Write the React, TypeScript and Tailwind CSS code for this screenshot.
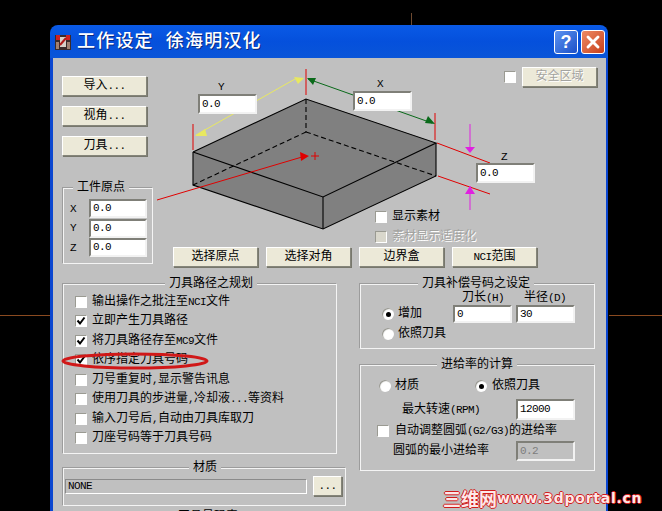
import React from "react";
import { X } from "lucide-react";

const L = ({ children }: { children: React.ReactNode }) => (
  <span className="text-[11px] tracking-[-0.6px]">{children}</span>
);

const Btn = ({ children, width = "w-[85px]", disabled = false }: { children: React.ReactNode; width?: string; disabled?: boolean }) => (
  <div
    className={`h-5 flex items-center justify-center bg-[#ece9d8] border border-t-white border-l-white border-r-[#85857a] border-b-[#85857a] shadow-[1px_1px_0_#77776c] ${
      disabled ? "text-[#a3a3a0] [text-shadow:1px_1px_0_#fff]" : ""
    } ${width}`}
  >
    {children}
  </div>
);

const Field = ({ value, className = "", disabled = false }: { value: string; className?: string; disabled?: boolean }) => (
  <div
    className={`flex items-center pl-[2px] border-2 border-t-[#7f7f78] border-l-[#7f7f78] border-r-[#f2f2f2] border-b-[#f2f2f2] ${
      disabled ? "bg-[#c0c0c0] text-[#7d7d7d]" : "bg-white text-black"
    } ${className}`}
  >
    <L>{value}</L>
  </div>
);

const Check = ({ checked = false, disabled = false }: { checked?: boolean; disabled?: boolean }) => (
  <div
    className={`w-3 h-3 shrink-0 flex items-center justify-center border border-t-[#9a9a92] border-l-[#9a9a92] border-r-white border-b-white ${
      disabled ? "bg-[#d9d7cc]" : "bg-white"
    }`}
  >
    {checked && (
      <svg width="10" height="10" viewBox="0 0 10 10">
        <path d="M1.5 4.5 L4 7.5 L8.5 1.5" fill="none" stroke="#000" strokeWidth="2" />
      </svg>
    )}
  </div>
);

const Radio = ({ on = false }: { on?: boolean }) => (
  <div className="w-3 h-3 shrink-0 rounded-full bg-white flex items-center justify-center shadow-[inset_1px_1px_1px_#8f8f88]">
    {on && <div className="w-[5px] h-[5px] rounded-full bg-black" />}
  </div>
);

const Group = ({ title, titleLeft, className = "", children }: { title: string; titleLeft: string; className?: string; children?: React.ReactNode }) => (
  <fieldset className={`border border-[#f4f4f4] shadow-[-1px_-1px_0_#9c9c9c] ${className}`}>
    <legend className={`px-1 h-4 leading-4 bg-[#c0c0c0] ${titleLeft}`}>{title}</legend>
    {children}
  </fieldset>
);

const toolRows: { label: React.ReactNode; checked?: boolean; circled?: boolean }[] = [
  { label: <>输出操作之批注至<L>NCI</L>文件</> },
  { label: "立即产生刀具路径", checked: true },
  { label: <>将刀具路径存至<L>MC9</L>文件</>, checked: true },
  { label: "依序指定刀具号码", checked: true, circled: true },
  { label: <>刀号重复时<L>,</L>显示警告讯息</> },
  { label: <>使用刀具的步进量<L>,</L>冷却液<L>...</L>等资料</> },
  { label: <>输入刀号后<L>,</L>自动由刀具库取刀</> },
  { label: "刀座号码等于刀具号码" },
];

function StockDrawing() {
  return (
    <svg className="w-[451px] h-[185px] block" viewBox="155 58 451 185">
      <polygon points="306,99 436,143 436,176 323,229 193,185 193,152" fill="#808080" />
      <g stroke="#000" fill="none" strokeWidth="1.1">
        <polyline points="193,152 306,99 436,143 323,197 193,152" />
        <polyline points="193,152 193,185 323,229 436,176 436,143" />
        <line x1="323" y1="197" x2="323" y2="229" />
        <g strokeDasharray="5 3">
          <line x1="306" y1="99" x2="306" y2="132" />
          <line x1="306" y1="132" x2="193" y2="185" />
          <line x1="306" y1="132" x2="436" y2="176" />
        </g>
      </g>
      <g stroke="#e00000" strokeWidth="1" fill="none">
        <line x1="306" y1="69" x2="306" y2="95" />
        <line x1="193" y1="124" x2="193" y2="150" />
        <line x1="435" y1="113" x2="435" y2="140" />
        <line x1="157" y1="200" x2="302" y2="157" />
        <line x1="437" y1="143" x2="490" y2="163" />
        <line x1="438" y1="176" x2="490" y2="194" />
        <line x1="311" y1="156" x2="319" y2="156" />
        <line x1="315" y1="152" x2="315" y2="160" />
      </g>
      <polygon points="300,152 309,156 301,161" fill="#e00000" />
      <line x1="295" y1="79" x2="196" y2="135" stroke="#e8e860" />
      <polygon points="304,78 294,77 298,84" fill="#e8e860" />
      <polygon points="195,136 205,129 207,136" fill="#e8e860" />
      <line x1="308" y1="79" x2="432" y2="123" stroke="#0a6a1a" />
      <polygon points="307,78 316,78 313,85" fill="#0a6a1a" />
      <polygon points="435,124 425,123 428,116" fill="#0a6a1a" />
      <line x1="470" y1="124" x2="470" y2="152" stroke="#e020e0" />
      <polygon points="470,153 465,147 475,147" fill="#e020e0" />
      <line x1="470" y1="186" x2="470" y2="210" stroke="#e020e0" />
      <polygon points="470,186 465,194 475,194" fill="#e020e0" />
    </svg>
  );
}

export default function App() {
  return (
    <div
      className="relative w-[662px] h-[511px] overflow-hidden bg-black pl-[50px] pt-[25px] text-[12px] leading-none text-black"
      style={{ fontFamily: '"Liberation Mono", "Noto Sans CJK SC", monospace' }}
    >
      {/* lines of the CAD view behind the dialog */}
      <div className="absolute left-0 top-[315px] w-[50px] h-px bg-[#8a4a20]" />
      <div className="absolute left-[609px] top-[315px] w-[53px] h-px bg-[#8a4a20]" />
      <div className="absolute left-[411px] top-[13px] w-px h-3 bg-[#6e4a30]" />

      <div className="w-[558px]">
        {/* Title bar */}
        <div className="h-[33px] rounded-t-lg bg-gradient-to-b from-[#0a5ae6] via-[#0550dc] to-[#0a55d8] flex items-center pl-[5px] pr-[3px]">
          <svg width="16" height="16" viewBox="0 0 16 16" className="shrink-0">
            <rect x="0" y="1" width="16" height="15" fill="#3a2a2a" />
            <rect x="1" y="1" width="4" height="5" fill="#d02020" />
            <rect x="11" y="1" width="4" height="5" fill="#d02020" />
            <path d="M5 3 H11 V13 H5 Z" fill="#d8d0c8" />
            <path d="M5 11 L11 4" stroke="#b01818" strokeWidth="2" />
            <rect x="1" y="8" width="3" height="7" fill="#a08070" />
            <rect x="12" y="8" width="3" height="7" fill="#a08070" />
          </svg>
          <span className="ml-[6px] text-white text-[18px] tracking-[1.2px] font-medium whitespace-pre [text-shadow:1px_1px_0_#0a2a80]">
            工作设定 徐海明汉化
          </span>
          <div className="ml-auto flex gap-[3px]">
            <div className="w-6 h-6 rounded-[3px] border border-white bg-gradient-to-br from-[#5c93f0] to-[#1c4fc8] flex items-center justify-center text-white text-[18px] font-bold" style={{ fontFamily: '"Liberation Sans", sans-serif' }}>
              ?
            </div>
            <div className="w-6 h-6 rounded-[3px] border border-white bg-gradient-to-br from-[#ee8a64] to-[#c63d16] flex items-center justify-center text-white">
              <X size={20} strokeWidth={3.5} />
            </div>
          </div>
        </div>

        {/* Dialog body */}
        <div className="bg-[#c0c0c0] border-l-[3px] border-r-2 border-[#0b46d0] h-[460px]">
          <div className="flex">
            <div className="w-[102px] shrink-0 pl-[9px] pt-[18px]">
              <div className="flex flex-col gap-[10px]">
                <Btn>导入<L>...</L></Btn>
                <Btn>视角<L>...</L></Btn>
                <Btn>刀具<L>...</L></Btn>
              </div>
              <Group title="工件原点" titleLeft="ml-[3px]" className="mt-[24px] ml-px w-[90px] h-[84px] pl-[6px]">
                <div className="pt-[3px] flex flex-col gap-[0.5px]">
                  {["X", "Y", "Z"].map((axis) => (
                    <div key={axis} className="flex items-center">
                      <span className="w-[19px]"><L>{axis}</L></span>
                      <Field value="0.0" className="w-[58px] h-[19px]" />
                    </div>
                  ))}
                </div>
              </Group>
            </div>

            <div className="w-[451px]">
              <div className="relative h-[185px]">
                <StockDrawing />
                <span className="absolute left-[63px] top-[23px]"><L>Y</L></span>
                <Field value="0.0" className="absolute left-[43px] top-[36px] w-[59px] h-5" />
                <span className="absolute left-[222px] top-[20px]"><L>X</L></span>
                <Field value="0.0" className="absolute left-[198px] top-[33px] w-[59px] h-5" />
                <span className="absolute left-[346px] top-[93px]"><L>Z</L></span>
                <Field value="0.0" className="absolute left-[321px] top-[105px] w-[59px] h-5" />
                <div className="absolute left-[349px] top-[9px] flex items-center gap-[6px]">
                  <Check />
                  <Btn disabled width="w-[75px]">安全区域</Btn>
                </div>
                <div className="absolute left-[220px] top-[153px] flex flex-col gap-2">
                  <div className="flex items-center gap-[5px]"><Check />显示素材</div>
                  <div className="flex items-center gap-[5px] text-[#a3a3a0] [text-shadow:1px_1px_0_#fff]"><Check disabled />素材显示适度化</div>
                </div>
              </div>
              <div className="flex gap-2 mt-1 pl-[18px]">
                <Btn>选择原点</Btn>
                <Btn>选择对角</Btn>
                <Btn>边界盒</Btn>
                <Btn><L>NCI</L>范围</Btn>
              </div>
            </div>
          </div>

          <div className="flex pl-[10px] mt-[9px]">
            <div className="w-[283px] shrink-0">
              <Group title="刀具路径之规划" titleLeft="ml-[90px]" className="w-[274px] h-[178px] pl-[11px]">
                <div className="flex flex-col">
                  {toolRows.map((row, i) => (
                    <div key={i} className="relative flex items-center gap-[5px] h-[19.5px]">
                      <Check checked={row.checked} />
                      <span className="whitespace-nowrap">{row.label}</span>
                      {row.circled && (
                        <svg className="absolute left-[-14px] top-[-1px]" width="148" height="22" viewBox="0 0 148 22">
                          <ellipse cx="74" cy="11" rx="72" ry="7" fill="none" stroke="#d01818" strokeWidth="3" />
                        </svg>
                      )}
                    </div>
                  ))}
                </div>
              </Group>
              <Group title="材质" titleLeft="ml-[124px]" className="mt-[6px] w-[283px] h-[46px] px-px">
                <div className="flex items-center gap-[6px]">
                  <div className="w-[242px] h-[15px] flex items-center pl-[2px] border border-t-[#8a8a8a] border-l-[#8a8a8a] border-r-white border-b-white">
                    <L>NONE</L>
                  </div>
                  <Btn width="w-[29px]"><L>...</L></Btn>
                </div>
              </Group>
              <Group title="刀具号码表" titleLeft="ml-[110px]" className="mt-[3px] w-[283px] h-10" />
            </div>

            <div className="ml-[14px] w-[235px] shrink-0">
              <Group title="刀具补偿号码之设定" titleLeft="ml-[57px]" className="h-[73px] flex">
                <div className="flex">
                  <div className="w-[92px] pl-[21px] pt-3 flex flex-col">
                    <div className="h-5 flex items-center gap-[4px]"><Radio on />增加</div>
                    <div className="h-5 flex items-center gap-[4px]"><Radio />依照刀具</div>
                  </div>
                  <div className="flex gap-[4px]">
                    <div className="w-[59px]">
                      <div className="h-[13px] pl-[9px] whitespace-nowrap">刀长<L>(H)</L></div>
                      <Field value="0" className="w-[59px] h-[18px]" />
                    </div>
                    <div className="w-[59px]">
                      <div className="h-[13px] pl-[8px] whitespace-nowrap">半径<L>(D)</L></div>
                      <Field value="30" className="w-[59px] h-[18px]" />
                    </div>
                  </div>
                </div>
              </Group>
              <Group title="进给率的计算" titleLeft="ml-[76px]" className="mt-[8px] h-[114px]">
                <div className="flex items-center h-5 mt-[3px] pl-[18px]">
                  <div className="w-[96px] flex items-center gap-[4px]"><Radio />材质</div>
                  <div className="flex items-center gap-[5px]"><Radio on />依照刀具</div>
                </div>
                <div className="flex items-center justify-between mt-[3px] pl-[41px] pr-[19px]">
                  <span>最大转速<L>(RPM)</L></span>
                  <Field value="12000" className="w-[59px] h-[21px]" />
                </div>
                <div className="flex items-center gap-[6px] mt-[3px] h-4 pl-[16px]">
                  <Check />
                  <span>自动调整圆弧<L>(G2/G3)</L>的进给率</span>
                </div>
                <div className="flex items-center justify-between mt-[2px] pl-[32px] pr-[19px]">
                  <span>圆弧的最小进给率</span>
                  <Field value="0.2" disabled className="w-[59px] h-5" />
                </div>
              </Group>
            </div>
          </div>
        </div>
      </div>

      {/* watermark */}
      <div className="absolute left-[443px] top-[489px] flex items-center whitespace-nowrap text-[#fde8e8] font-bold [text-shadow:1px_0_0_#d01c1c,-1px_0_0_#d01c1c,0_1px_0_#d01c1c,0_-1px_0_#d01c1c]">
        <span className="text-[18px] w-[54px]" style={{ fontFamily: '"Noto Sans CJK SC", sans-serif' }}>三维网</span>
        <span className="text-[14px] tracking-[0.75px]" style={{ fontFamily: '"DejaVu Sans", sans-serif' }}>www.3dportal.cn</span>
      </div>
    </div>
  );
}
